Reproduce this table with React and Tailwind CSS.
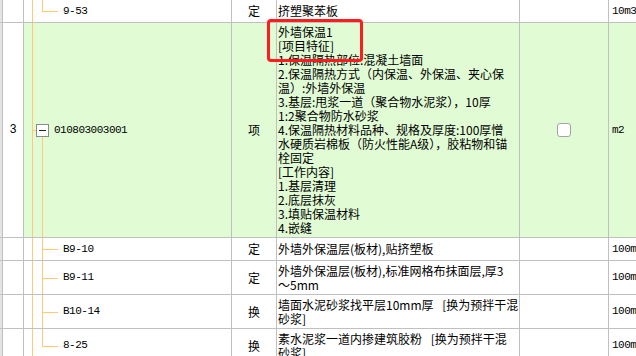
import React from "react";

const CJK = "font-['Noto_Sans_CJK_SC','Noto_Sans_CJK_JP',sans-serif]";
const MONO = "font-['Liberation_Mono','Noto_Sans_CJK_SC',monospace]";

const descMain = [
  "外墙保温1",
  "[项目特征]",
  "1.保温隔热部位:混凝土墙面",
  "2.保温隔热方式（内保温、外保温、夹心保",
  "温）:外墙外保温",
  "3.基层:甩浆一道（聚合物水泥浆），10厚",
  "1:2聚合物防水砂浆",
  "4.保温隔热材料品种、规格及厚度:100厚憎",
  "水硬质岩棉板（防火性能A级），胶粘物和锚",
  "栓固定",
  "[工作内容]",
  "1.基层清理",
  "2.底层抹灰",
  "3.填贴保温材料",
  "4.嵌缝",
];

function Tree({ kind }) {
  const orange = "bg-[#ffc976]";
  return (
    <>
      <div className={`absolute left-[8px] top-0 bottom-0 w-px ${orange}`} />
      {kind === "child" && (
        <>
          <div className={`absolute left-[18px] top-0 bottom-0 w-px ${orange}`} />
          <div className={`absolute left-[18px] top-1/2 w-[16px] h-px ${orange}`} />
        </>
      )}
      {kind === "last" && (
        <>
          <div className={`absolute left-[18px] top-0 h-1/2 w-px ${orange}`} />
          <div className={`absolute left-[18px] top-1/2 w-[16px] h-px ${orange}`} />
        </>
      )}
      {kind === "parent" && (
        <>
          <div className={`absolute left-[8px] top-1/2 w-[4px] h-px ${orange}`} />
          <div className={`absolute left-[18px] top-[calc(50%+6px)] bottom-0 w-px ${orange}`} />
        </>
      )}
    </>
  );
}

function Row({ h, green, idx, tree, code, type, desc, check, unit }) {
  const bg = green ? "bg-[#e1fcd5]" : "bg-white";
  return (
    <div className={`flex ${h} border-b border-[#c0c0c0]`}>
      <div className="w-[3px] shrink-0 border-r border-[#c0c0c0] bg-[#e4e4e4]" />
      <div className="w-[21px] shrink-0 border-r border-[#c0c0c0] bg-white flex items-center justify-center text-[12px] text-black font-['Liberation_Mono',monospace]">
        {idx}
      </div>
      <div className={`relative w-[208px] shrink-0 border-r border-[#c0c0c0] ${bg} flex items-center`}>
        <Tree kind={tree} />
        {tree === "parent" ? (
          <div className="flex items-center pl-[12px] gap-[5px]">
            <div className="relative w-[13px] h-[13px] border border-[#8a8a8a] bg-white flex items-center justify-center">
              <div className="w-[7px] h-px bg-[#222]" />
            </div>
            <span className={`${MONO} text-[11px] tracking-[-0.5px] text-black leading-none`}>{code}</span>
          </div>
        ) : (
          <span className={`${MONO} text-[11px] tracking-[-0.5px] text-black leading-none pl-[39px]`}>{code}</span>
        )}
      </div>
      <div className={`w-[45px] shrink-0 border-r border-[#c0c0c0] ${bg} flex items-center justify-center ${CJK} text-[12px] text-black`}>
        {type}
      </div>
      <div className={`w-[243px] shrink-0 border-r border-[#c0c0c0] ${bg} flex flex-col justify-center pl-[1px] ${CJK} text-[12px] leading-[14px] text-black`}>
        {desc.map((l, i) => (
          <div key={i} className="whitespace-pre h-[14px]">{l}</div>
        ))}
      </div>
      <div className={`w-[89px] shrink-0 border-r border-[#c0c0c0] ${bg} flex items-center justify-center`}>
        {check && <div className="w-[14px] h-[14px] rounded-[3px] border border-[#a4a4a4] bg-white" />}
      </div>
      <div className={`flex-1 ${bg} flex items-center pl-[3px] ${MONO} text-[11px] tracking-[-0.5px] text-black whitespace-nowrap overflow-hidden`}>
        {unit}
      </div>
    </div>
  );
}

export default function App() {
  return (
    <div className="relative w-[636px] h-[356px] overflow-hidden bg-white">
      <Row h="h-[23px]" tree="last" code="9-53" type="定" desc={["挤塑聚苯板"]} unit="10m3" />
      <Row h="h-[215px]" green idx="3" tree="parent" code="010803003001" type="项" desc={descMain} check unit="m2" />
      <Row h="h-[23px]" tree="child" code="B9-10" type="定" desc={["外墙外保温层(板材),贴挤塑板"]} unit="100m3" />
      <Row h="h-[34px]" tree="child" code="B9-11" type="定" desc={["外墙外保温层(板材),标准网格布抹面层,厚3", "～5mm"]} unit="100m2" />
      <Row h="h-[34px]" tree="child" code="B10-14" type="换" desc={["墙面水泥砂浆找平层10mm厚\u2002 [换为预拌干混", "砂浆]"]} unit="100m2" />
      <Row h="h-[34px]" tree="last" code="8-25" type="换" desc={["素水泥浆一道内掺建筑胶粉\u2002 [换为预拌干混", "砂浆]"]} unit="100m2" />
      <div className="absolute left-[267px] top-[19px] w-[96px] h-[43px] border-[3px] border-[#ff1c1c] rounded-[4px]" />
    </div>
  );
}
